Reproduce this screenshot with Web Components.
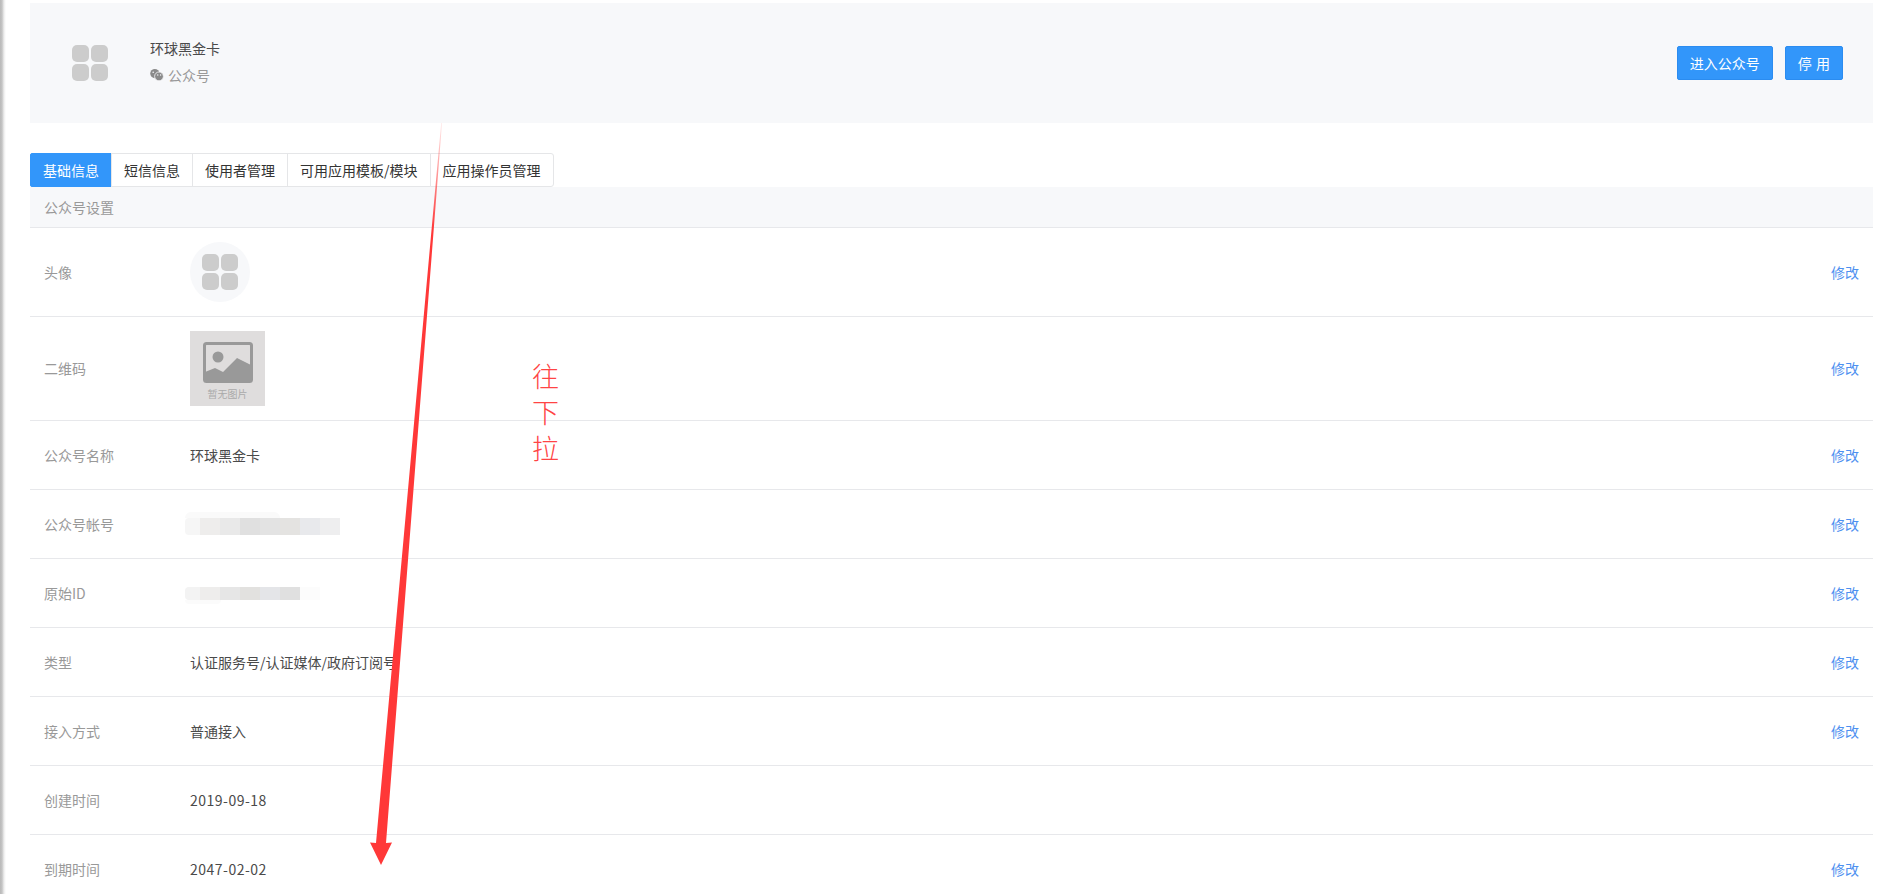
<!DOCTYPE html>
<html lang="zh">
<head>
<meta charset="utf-8">
<title>公众号设置</title>
<style>
html, body { margin: 0; height: 894px; overflow: hidden; background: #fff; }
body { font: 14px/20px "Noto Sans CJK SC", "Liberation Sans", sans-serif; color: #333; }
</style>
</head>
<body>
<app-page>
  <app-header name="环球黑金卡" kind="公众号">
    <app-button>进入公众号</app-button>
    <app-button spaced>停 用</app-button>
  </app-header>
  <app-tabs>
    <app-tab active>基础信息</app-tab>
    <app-tab>短信信息</app-tab>
    <app-tab>使用者管理</app-tab>
    <app-tab>可用应用模板/模块</app-tab>
    <app-tab>应用操作员管理</app-tab>
  </app-tabs>
  <app-section>公众号设置</app-section>
  <app-row label="头像" action="修改"><app-logo round></app-logo></app-row>
  <app-row label="二维码" action="修改" lift><app-noimage></app-noimage></app-row>
  <app-row label="公众号名称" action="修改">环球黑金卡</app-row>
  <app-row label="公众号帐号" action="修改"><app-mosaic variant="a"></app-mosaic></app-row>
  <app-row label="原始ID" action="修改"><app-mosaic variant="b"></app-mosaic></app-row>
  <app-row label="类型" action="修改">认证服务号/认证媒体/政府订阅号</app-row>
  <app-row label="接入方式" action="修改">普通接入</app-row>
  <app-row label="创建时间"><span style="letter-spacing:.5px">2019-09-18</span></app-row>
  <app-row label="到期时间" action="修改"><span style="letter-spacing:.5px">2047-02-02</span></app-row>
  <app-annotation></app-annotation>
</app-page>

<script>
/* PAGE SHELL */
class AppPage extends HTMLElement {
  constructor() {
    super();
    this.attachShadow({mode: 'open'});
    this.shadowRoot.innerHTML = `<style>
      :host { display: block; position: relative; height: 894px; overflow: hidden; }
      .strip { position: absolute; left: 0; top: 0; bottom: 0; width: 6px;
        background: linear-gradient(to right, #b9b9b9 0, #c4c4c4 2px, #eee 4px, #fff 6px); }
      main { margin-left: 30px; width: 1843px; padding-top: 3px; }
    </style>
    <div class="strip"></div>
    <main><slot></slot></main>`;
  }
}
customElements.define('app-page', AppPage);

/* LOGO: FOUR ROUNDED SQUARES */
class AppLogo extends HTMLElement {
  constructor() {
    super();
    this.attachShadow({mode: 'open'});
    this.shadowRoot.innerHTML = `<style>
      :host { display: inline-flex; align-items: center; justify-content: center; width: 36px; height: 36px; }
      :host([round]) { width: 60px; height: 60px; border-radius: 50%; background: #f7f8fa; }
      svg { display: block; }
    </style>
    <svg width="36" height="36" viewBox="0 0 36 36" fill="#cccccc">
      <rect x="0" y="0" width="17" height="17" rx="5"/>
      <rect x="19" y="0" width="17" height="17" rx="5"/>
      <rect x="0" y="19" width="17" height="17" rx="5"/>
      <rect x="19" y="19" width="17" height="17" rx="5"/>
    </svg>`;
  }
}
customElements.define('app-logo', AppLogo);

/* TOP PANEL */
class AppHeader extends HTMLElement {
  constructor() {
    super();
    this.attachShadow({mode: 'open'});
    this.shadowRoot.innerHTML = `<style>
      :host { display: flex; align-items: center; height: 120px; background: #f7f8fa; padding: 0 29px 0 42px; box-sizing: border-box; }
      .info { margin-left: 42px; flex: 1; display: flex; flex-direction: column; gap: 6px; padding-bottom: 3px; }
      .name { color: #4a4a4a; height: 20px; }
      .kind { color: #999; height: 20px; margin-top: 1px; display: flex; align-items: center; gap: 4px; }
      .actions { display: flex; gap: 12px; margin-right: 1px; }
    </style>
    <app-logo></app-logo>
    <div class="info">
      <div class="name"></div>
      <div class="kind">
        <svg width="14" height="12" viewBox="0 0 14 12">
          <circle cx="4.8" cy="4.6" r="4.6" fill="#8a8a8a"/>
          <circle cx="9" cy="7.4" r="4.4" fill="#8a8a8a" stroke="#f7f8fa" stroke-width=".8"/>
          <circle cx="3.2" cy="3.2" r=".8" fill="#f7f8fa"/>
          <circle cx="7.8" cy="6" r=".7" fill="#f7f8fa"/>
          <circle cx="10.6" cy="6" r=".7" fill="#f7f8fa"/>
        </svg>
        <span class="kind-text"></span>
      </div>
    </div>
    <div class="actions"><slot></slot></div>`;
  }
  connectedCallback() {
    this.shadowRoot.querySelector('.name').textContent = this.getAttribute('name');
    this.shadowRoot.querySelector('.kind-text').textContent = this.getAttribute('kind');
  }
}
customElements.define('app-header', AppHeader);

class AppButton extends HTMLElement {
  constructor() {
    super();
    this.attachShadow({mode: 'open'});
    this.shadowRoot.innerHTML = `<style>
      :host { display: block; box-sizing: border-box; height: 34px; padding: 6px 12px; line-height: 20px;
        background: #3296fa; border: 1px solid #2b8cf0; border-radius: 2px; color: #fff; white-space: pre; }
      :host([spaced]) { word-spacing: 1px; }
    </style><slot></slot>`;
  }
}
customElements.define('app-button', AppButton);

/* TABS */
class AppTabs extends HTMLElement {
  constructor() {
    super();
    this.attachShadow({mode: 'open'});
    this.shadowRoot.innerHTML = `<style>
      :host { display: flex; margin-top: 30px; height: 34px; }
    </style><slot></slot>`;
  }
}
customElements.define('app-tabs', AppTabs);

class AppTab extends HTMLElement {
  constructor() {
    super();
    this.attachShadow({mode: 'open'});
    this.shadowRoot.innerHTML = `<style>
      :host { display: block; box-sizing: border-box; height: 34px; padding: 6px 12px; line-height: 20px;
        border: 1px solid #e5e6e8; margin-left: -1px; color: #333; background: #fff; white-space: nowrap; }
      :host(:first-child) { margin-left: 0; border-radius: 2px 0 0 2px; }
      :host(:last-child) { border-radius: 0 3px 3px 0; }
      :host([active]) { background: #3296fa; border-color: #3296fa; color: #fff; }
    </style><slot></slot>`;
  }
}
customElements.define('app-tab', AppTab);

/* SETTINGS LIST */
class AppSection extends HTMLElement {
  constructor() {
    super();
    this.attachShadow({mode: 'open'});
    this.shadowRoot.innerHTML = `<style>
      :host { display: flex; align-items: center; box-sizing: border-box; height: 41px; padding-left: 14px;
        background: #f7f8fa; border-bottom: 1px solid #e7e8eb; color: #999; }
    </style><slot></slot>`;
  }
}
customElements.define('app-section', AppSection);

class AppRow extends HTMLElement {
  constructor() {
    super();
    this.attachShadow({mode: 'open'});
    this.shadowRoot.innerHTML = `<style>
      :host { display: grid; grid-template-columns: 160px 1fr auto; align-items: center; box-sizing: border-box;
        min-height: 69px; padding: 14px 14px 14px 14px; border-bottom: 1px solid #e7e8eb; }
      .label { color: #999; }
      .value { color: #4a4a4a; margin-left: -14px; display: flex; align-items: center; }
      .action { color: #4d90f0; }
      :host([lift]) .label, :host([lift]) .action { margin-bottom: 2px; }
    </style>
    <div class="label"></div>
    <div class="value"><slot></slot></div>
    <div class="action"></div>`;
  }
  connectedCallback() {
    this.shadowRoot.querySelector('.label').textContent = this.getAttribute('label');
    this.shadowRoot.querySelector('.action').textContent = this.getAttribute('action') || '';
  }
}
customElements.define('app-row', AppRow);

/* PLACEHOLDER PICTURE */
class AppNoimage extends HTMLElement {
  constructor() {
    super();
    this.attachShadow({mode: 'open'});
    this.shadowRoot.innerHTML = `<style>
      :host { display: flex; flex-direction: column; align-items: center; box-sizing: border-box;
        width: 75px; height: 75px; padding-top: 11px; background: #dfdddd; }
      svg { display: block; }
      span { font-size: 10px; line-height: 14px; margin-top: 4px; color: #aaa; }
    </style>
    <svg width="50" height="41" viewBox="0 0 50 41">
      <rect x="1.5" y="1.5" width="47" height="38" rx="2" fill="none" stroke="#999" stroke-width="3"/>
      <circle cx="15" cy="15" r="5.5" fill="#999"/>
      <path d="M2 30 12 26 20 30 34 16 48 23 48 39 2 39z" fill="#999"/>
    </svg>
    <span>暂无图片</span>`;
  }
}
customElements.define('app-noimage', AppNoimage);

/* BLURRED VALUES */
const mosaicVariants = {
  a: { lead: '#f6f6f6', over: '#fafafa', overWidth: 95, under: 'transparent', underWidth: 0, shift: 3, cellHeight: 17,
       cells: ['#eeedec', '#e9e9e9', '#e0e0e0', '#e3e3e3', '#e4e3e1', '#e8e9ec', '#eeeeef'] },
  b: { lead: '#f3f3f3', over: 'transparent', overWidth: 0, under: '#fbfbfb', underWidth: 36, shift: 4, cellHeight: 13,
       cells: ['#eeedec', '#e6e6e6', '#e2e1df', '#e4e5e8', '#e0e0e0', '#fcfcfc'] }
};
class AppMosaic extends HTMLElement {
  constructor() {
    super();
    this.attachShadow({mode: 'open'});
    this.shadowRoot.innerHTML = `<style>
      :host { display: block; margin-left: -5px; }
      .over { border-radius: 6px 6px 0 0; }
      .under { height: 4px; border-radius: 0 0 6px 6px; }
      .line { display: flex; }
      .lead { width: 15px; border-radius: 4px 0 0 4px; }
      .cell { width: 20px; }
    </style><div class="over"></div><div class="line"></div><div class="under"></div>`;
  }
  connectedCallback() {
    const v = mosaicVariants[this.getAttribute('variant')];
    this.style.marginTop = v.shift + 'px';
    const over = this.shadowRoot.querySelector('.over');
    over.style.background = v.over;
    over.style.width = v.overWidth + 'px';
    over.style.height = v.overWidth ? '6px' : '0';
    const under = this.shadowRoot.querySelector('.under');
    under.style.background = v.under;
    under.style.width = v.underWidth + 'px';
    const line = this.shadowRoot.querySelector('.line');
    line.style.height = v.cellHeight + 'px';
    line.innerHTML = `<div class="lead" style="background:${v.lead}"></div>` +
      v.cells.map(c => `<div class="cell" style="background:${c}"></div>`).join('');
  }
}
customElements.define('app-mosaic', AppMosaic);

/* RED HAND-DRAWN ARROW AND NOTE, LYING OVER THE PAGE */
class AppAnnotation extends HTMLElement {
  constructor() {
    super();
    this.attachShadow({mode: 'open'});
    this.shadowRoot.innerHTML = `<style>
      :host { display: block; position: absolute; inset: 0; pointer-events: none; }
      svg { position: absolute; left: 0; top: 0; }
      .note { position: absolute; left: 532px; top: 358px; width: 27px; font-size: 27px; line-height: 36px;
        color: #ff4444; font-weight: 300; font-family: "Noto Sans CJK SC", sans-serif; }
    </style>
    <svg width="1892" height="894">
      <defs>
        <linearGradient id="fade" gradientUnits="userSpaceOnUse" x1="0" y1="123" x2="0" y2="230">
          <stop offset="0" stop-color="#ff3838" stop-opacity=".1"/>
          <stop offset="1" stop-color="#ff3838"/>
        </linearGradient>
      </defs>
      <path d="M441.2 123 442 123 386 843 392 842.5 381 865 370 842.5 376 843z" fill="url(#fade)"/>
    </svg>
    <div class="note">往下拉</div>`;
  }
}
customElements.define('app-annotation', AppAnnotation);
</script>
</body>
</html>
